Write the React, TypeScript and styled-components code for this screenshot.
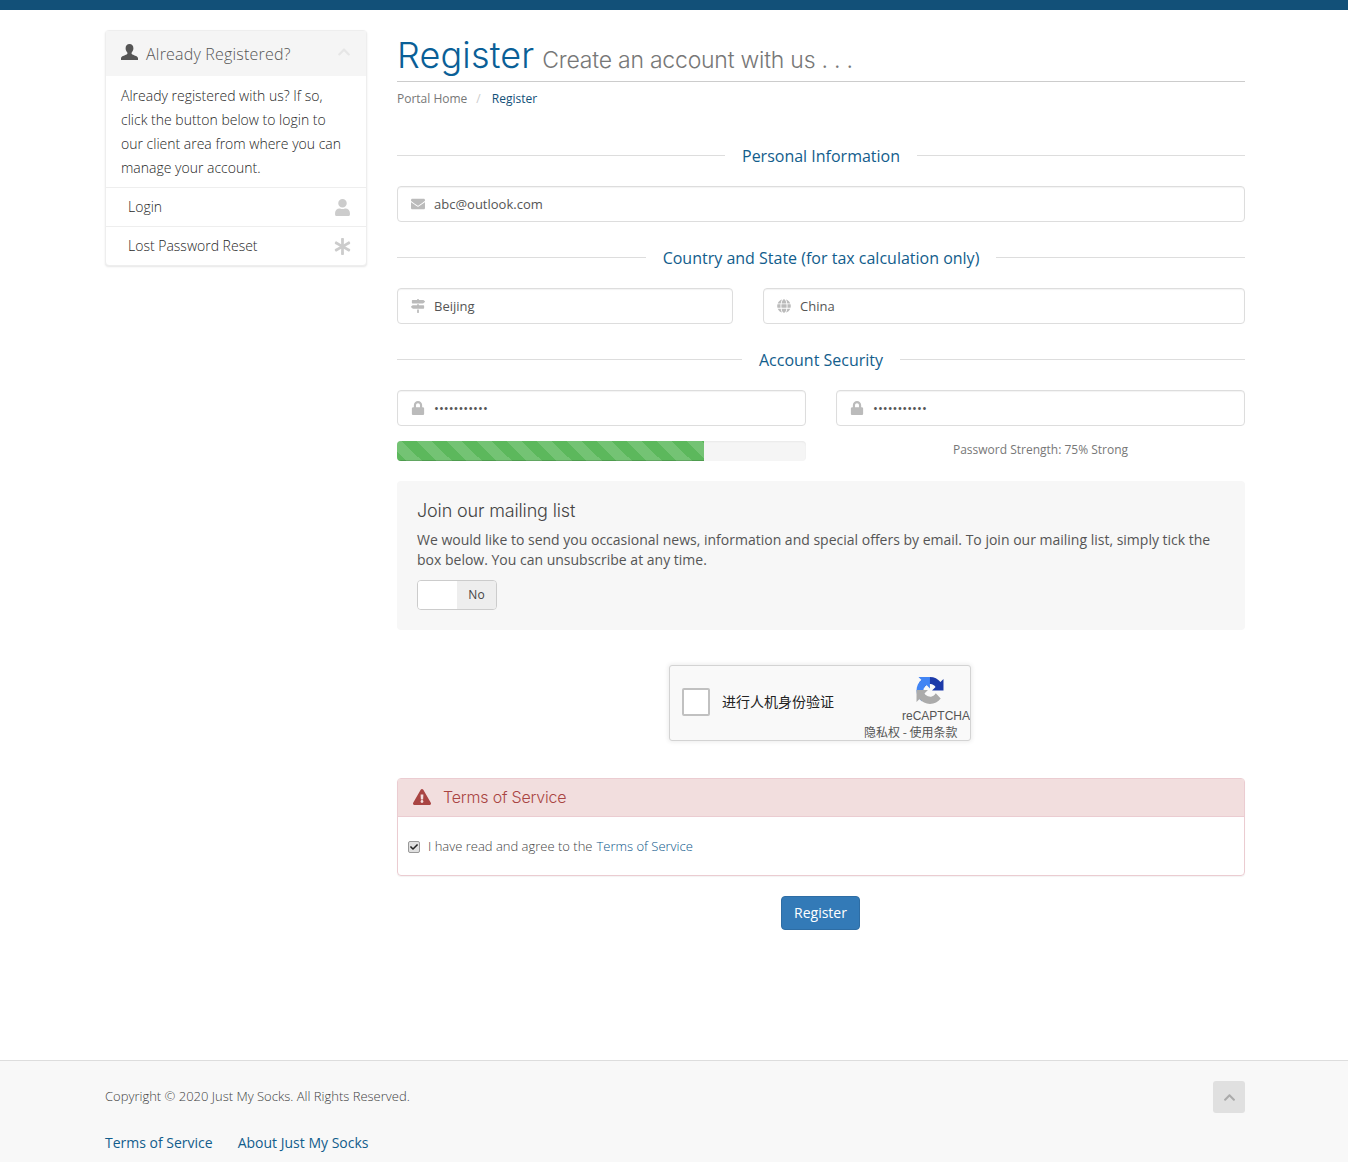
import React from "react";
import styled, { createGlobalStyle } from "styled-components";
import { FaEnvelope, FaMapSigns, FaGlobe, FaLock, FaAsterisk, FaExclamationTriangle, FaCheck, FaChevronUp, FaUser } from "react-icons/fa";

const Global = createGlobalStyle`
  html, body { margin: 0; padding: 0; background: #fff; }
  body { font-family: "Open Sans", "Liberation Sans", sans-serif; font-size: 14px; color: #444; line-height: 20px; }
  * { box-sizing: border-box; }
`;

const Page = styled.div`
  min-height: 1162px;
  display: flex;
  flex-direction: column;
  border-top: 10px solid #125078;
`;
const Container = styled.main`
  flex: 1;
  width: 1140px;
  margin-left: 105px;
  padding-top: 20px;
  display: flex;
  gap: 30px;
  align-items: flex-start;
`;
const Side = styled.aside`
  width: 262px;
  border: 1px solid #eee;
  border-radius: 4px;
  box-shadow: 0 1px 2px rgba(0, 0, 0, 0.1);
  background: #fff;
`;
const SideHead = styled.div`
  height: 45px;
  background: #f5f5f5;
  display: flex;
  align-items: center;
  padding: 0 15px;
  font-size: 16px;
  font-weight: 300;
  letter-spacing: 0.2px;
  color: #555;
`;
const SideHeadIcon = styled.svg`
  width: 17px;
  height: 16px;
  margin-right: 8px;
  margin-top: -3px;
  fill: #555;
`;
const Chevron = styled.span`
  margin-left: auto;
  display: flex;
  color: #e6e6e6;
  font-size: 14px;
  margin-top: -4px;
`;
const SideBody = styled.p`
  margin: 0;
  padding: 8px 15px 7px;
  line-height: 24px;
  font-weight: 300;
  color: #1f1f1f;
`;
const SideItem = styled.a`
  height: 39px;
  display: flex;
  align-items: center;
  justify-content: space-between;
  padding: 0 15px 0 22px;
  border-top: 1px solid #eee;
  font-weight: 300;
  color: #1f1f1f;
`;
const SideIcon = styled.span`
  display: flex;
  color: #ccc;
  font-size: 17px;
`;
const Content = styled.section`
  width: 848px;
  display: flex;
  flex-direction: column;
`;
const Title = styled.h1`
  margin: 0;
  height: 52px;
  border-bottom: 1px solid #ccc;
  display: flex;
  align-items: baseline;
  font-family: "Inter", "Lato", sans-serif;
  font-weight: 300;
  font-size: 36px;
  line-height: 51px;
  color: #0a5f97;
  letter-spacing: 0.15px;
`;
const Sub = styled.span`
  font-size: 23px;
  color: #777;
  margin-left: 8px;
  letter-spacing: -0.23px;
`;
const Crumbs = styled.nav`
  display: flex;
  margin-top: 7px;
  height: 20px;
  font-size: 12px;
  color: #777;
`;
const CrumbSep = styled.span`
  color: #ccc;
  margin: 0 11px 0 9px;
`;
const CrumbActive = styled.span`
  color: #125078;
`;
const Divider = styled.div<{ $top: number }>`
  display: flex;
  align-items: center;
  gap: 17px;
  margin-top: ${(p) => p.$top}px;
  height: 24px;
  font-size: 16px;
  color: #125d8c;
  white-space: nowrap;
  &::before, &::after {
    content: "";
    flex: 1;
    border-top: 1px solid #ddd;
    margin-bottom: 2px;
  }
`;
const Row = styled.div<{ $columns: string }>`
  display: grid;
  grid-template-columns: ${(p) => p.$columns};
  gap: 30px;
  margin-top: 18px;
`;
const Field = styled.label`
  height: 36px;
  display: flex;
  align-items: center;
  border: 1px solid #ddd;
  border-radius: 4px;
  background: #fff;
  box-shadow: inset 0 1px 1px rgba(0, 0, 0, 0.05);
`;
const FieldIcon = styled.span`
  width: 36px;
  padding-left: 4px;
  display: flex;
  justify-content: center;
  color: #bbb;
  font-size: 14px;
`;
const FieldInput = styled.input`
  flex: 1;
  min-width: 0;
  border: 0;
  outline: 0;
  padding: 0;
  background: transparent;
  font: inherit;
  font-size: 13px;
  color: #555;
`;
const StrengthRow = styled.div`
  display: grid;
  grid-template-columns: 1fr 1fr;
  gap: 30px;
  margin-top: 15px;
`;
const Track = styled.div`
  height: 20px;
  background: #f5f5f5;
  border-radius: 4px;
  overflow: hidden;
  box-shadow: inset 0 1px 2px rgba(0, 0, 0, 0.05);
`;
const Fill = styled.div`
  height: 100%;
  background-color: #5cb85c;
  background-image: linear-gradient(45deg, rgba(255,255,255,.15) 25%, transparent 25%, transparent 50%, rgba(255,255,255,.15) 50%, rgba(255,255,255,.15) 75%, transparent 75%, transparent);
  background-size: 30px 30px;
  background-position: 20px 0;
  box-shadow: inset 0 -1px 0 rgba(0, 0, 0, 0.15);
`;
const StrengthText = styled.div`
  text-align: center;
  font-size: 12px;
  line-height: 18px;
  color: #777;
`;
const Mailing = styled.div`
  margin-top: 20px;
  height: 149px;
  background: #f7f7f7;
  border-radius: 4px;
  padding: 18px 20px 20px;
`;
const MailingTitle = styled.h2`
  margin: 0;
  font-family: "Inter", "Lato", sans-serif;
  font-weight: 300;
  font-size: 18px;
  line-height: 24px;
  letter-spacing: -0.15px;
  color: #444;
`;
const MailingText = styled.p`
  margin: 7px 0 0;
  line-height: 20px;
  color: #555;
`;
const Toggle = styled.div`
  display: flex;
  width: 80px;
  height: 30px;
  margin-top: 10px;
  border: 1px solid #ccc;
  border-radius: 4px;
  overflow: hidden;
`;
const ToggleBlank = styled.span`
  flex: 1;
  background: #fff;
`;
const ToggleOff = styled.span`
  flex: 1;
  background: #eee;
  color: #444;
  font-size: 12px;
  display: flex;
  align-items: center;
  justify-content: center;
`;
const CaptchaWrap = styled.div`
  margin-top: 35px;
  padding-right: 2px;
  display: flex;
  justify-content: center;
`;
const Captcha = styled.div`
  width: 302px;
  height: 76px;
  border: 1px solid #d3d3d3;
  border-radius: 3px;
  background: #f9f9f9;
  box-shadow: 0 0 4px 1px rgba(0, 0, 0, 0.08);
  display: flex;
  align-items: center;
  padding-left: 12px;
  overflow: hidden;
`;
const CaptchaBox = styled.span`
  width: 28px;
  height: 28px;
  margin-top: -2px;
  border: 2px solid #c1c1c1;
  border-radius: 2px;
  background: #fff;
  margin-right: 12px;
`;
const CaptchaLabel = styled.span`
  font-family: "Noto Sans CJK SC", sans-serif;
  font-size: 14px;
  margin-top: -4px;
  color: #222;
`;
const CaptchaBrand = styled.div`
  margin-left: auto;
  width: 107px;
  height: 100%;
  display: flex;
  flex-direction: column;
  padding-top: 11px;
  color: #555;
  font-size: 12px;
  line-height: 16px;
`;
const CaptchaLogo = styled.svg`
  width: 32px;
  height: 32px;
  margin-left: 51px;
`;
const CaptchaName = styled.span`
  font-family: "Liberation Sans", sans-serif;
  align-self: flex-end;
  margin-top: 4px;
`;
const CaptchaTerms = styled.span`
  font-family: "Noto Sans CJK SC", sans-serif;
  white-space: nowrap;
  line-height: 16px;
  margin-left: 1px;
`;
const Terms = styled.div`
  margin-top: 37px;
  height: 98px;
  border: 1px solid #ebccd1;
  border-radius: 4px;
  box-shadow: 0 1px 1px rgba(0, 0, 0, 0.05);
`;
const TermsHead = styled.div`
  height: 38px;
  background: #f2dede;
  border-bottom: 1px solid #ebccd1;
  display: flex;
  align-items: center;
  padding: 0 0 1px 15px;
  font-family: "Inter", "Lato", sans-serif;
  font-weight: 300;
  font-size: 16px;
  letter-spacing: -0.2px;
  color: #a94442;
`;
const TermsIcon = styled.span`
  display: flex;
  font-size: 18px;
  margin-right: 12px;
`;
const TermsBody = styled.div`
  display: flex;
  align-items: center;
  padding: 19px 10px;
  font-size: 13px;
  font-weight: 300;
  color: #444;
`;
const Check = styled.span`
  width: 12px;
  height: 12px;
  border: 1px solid #999;
  border-radius: 2px;
  background: #e0e0e0;
  display: flex;
  align-items: center;
  justify-content: center;
  font-size: 8px;
  color: #222;
  margin: 2px 8px 0 0;
`;
const TermsLink = styled.a`
  color: #0b568a;
  margin-left: 4px;
`;
const Actions = styled.div`
  display: flex;
  justify-content: center;
  margin-top: 20px;
  padding-right: 1px;
`;
const Submit = styled.button`
  height: 34px;
  width: 79px;
  padding: 0;
  border: 1px solid #2e6da4;
  border-radius: 4px;
  background: #337ab7;
  color: #fff;
  font: inherit;
`;
const Footer = styled.footer`
  height: 102px;
  background: #f8f8f8;
  border-top: 1px solid #ddd;
`;
const FooterInner = styled.div`
  width: 1140px;
  margin-left: 105px;
  padding-top: 20px;
`;
const FooterTop = styled.div`
  display: flex;
  justify-content: space-between;
  align-items: center;
  height: 32px;
  font-size: 13px;
  font-weight: 300;
  color: #3f3f3f;
`;
const Copy = styled.span`
  margin-top: -2px;
`;
const TopButton = styled.a`
  width: 32px;
  height: 32px;
  border-radius: 3px;
  background: #e0e0e0;
  color: #aaa;
  font-size: 13px;
  display: flex;
  align-items: center;
  justify-content: center;
`;
const FooterLinks = styled.div`
  display: flex;
  gap: 25px;
  margin-top: 20px;
`;
const FooterLink = styled.a`
  color: #125d8c;
`;

export default function App() {
  return (
    <Page>
      <Global />
      <Container>
        <Side>
          <SideHead>
            <SideHeadIcon viewBox="0 0 17 16">
              <path d="M8.5 0C6 0 4.6 1.9 4.6 4.2c0 1.7.7 3.2 1.7 4.2.3.4.3 1.2-.1 1.7C5.1 11.3.6 12 0 14v2h17v-2c-.6-2-5.100-2.700-6.200-3.900-.4-.5-.4-1.300-.1-1.700 1-1 1.700-2.500 1.700-4.200C12.400 1.900 11 0 8.500 0z" />
            </SideHeadIcon>
            Already Registered?
            <Chevron><FaChevronUp /></Chevron>
          </SideHead>
          <SideBody>Already registered with us? If so, click the button below to login to our client area from where you can manage your account.</SideBody>
          <SideItem>Login<SideIcon><FaUser /></SideIcon></SideItem>
          <SideItem>Lost Password Reset<SideIcon><FaAsterisk /></SideIcon></SideItem>
        </Side>
        <Content>
          <Title>Register<Sub>Create an account with us . . .</Sub></Title>
          <Crumbs>Portal Home<CrumbSep>/</CrumbSep><CrumbActive>Register</CrumbActive></Crumbs>
          <Divider $top={35}>Personal Information</Divider>
          <Row $columns="1fr">
            <Field><FieldIcon><FaEnvelope /></FieldIcon><FieldInput readOnly value="abc@outlook.com" /></Field>
          </Row>
          <Divider $top={24}>Country and State (for tax calculation only)</Divider>
          <Row $columns="336px 482px">
            <Field><FieldIcon><FaMapSigns /></FieldIcon><FieldInput readOnly value="Beijing" /></Field>
            <Field><FieldIcon><FaGlobe /></FieldIcon><FieldInput readOnly value="China" /></Field>
          </Row>
          <Divider $top={24}>Account Security</Divider>
          <Row $columns="1fr 1fr">
            <Field><FieldIcon><FaLock /></FieldIcon><FieldInput readOnly type="password" value="abcdefghijk" /></Field>
            <Field><FieldIcon><FaLock /></FieldIcon><FieldInput readOnly type="password" value="abcdefghijk" /></Field>
          </Row>
          <StrengthRow>
            <Track><Fill style={{ width: "75%" }} /></Track>
            <StrengthText>Password Strength: 75% Strong</StrengthText>
          </StrengthRow>
          <Mailing>
            <MailingTitle>Join our mailing list</MailingTitle>
            <MailingText>We would like to send you occasional news, information and special offers by email. To join our mailing list, simply tick the box below. You can unsubscribe at any time.</MailingText>
            <Toggle><ToggleBlank /><ToggleOff>No</ToggleOff></Toggle>
          </Mailing>
          <CaptchaWrap>
            <Captcha>
              <CaptchaBox />
              <CaptchaLabel>进行人机身份验证</CaptchaLabel>
              <CaptchaBrand>
                <CaptchaLogo viewBox="0 0 64 64">
                  <path d="M64 31.955l-.033-1.37V4.687l-7.16 7.16C50.948 4.674 42.033.093 32.05.093c-10.4 0-19.622 4.96-25.458 12.64l11.736 11.86c1.15-2.127 2.784-3.955 4.754-5.33 2.05-1.6 4.952-2.91 9-2.91.49 0 .867.058 1.144.165 5.014.396 9.36 3.163 11.92 7.18l-8.307 8.306c10.523-.04 22.412-.066 27.16.006" fill="#1c3aa9" />
                  <path d="M31.904 0l-1.37.033H4.636l7.16 7.16C4.622 13.05.04 21.967.04 31.95c0 10.4 4.96 19.622 12.64 25.458l11.86-11.736c-2.127-1.15-3.955-2.784-5.33-4.754-1.6-2.05-2.91-4.952-2.91-9 0-.49.058-.867.165-1.144.396-5.014 3.163-9.36 7.18-11.92l8.306 8.307c-.04-10.523-.066-22.412.006-27.16" fill="#4285f4" />
                  <path d="M0 31.95l.033 1.37v25.9l7.16-7.16c5.858 7.173 14.774 11.755 24.757 11.755 10.4 0 19.622-4.96 25.458-12.64L45.672 38.44c-1.15 2.127-2.784 3.955-4.754 5.33-2.05 1.6-4.952 2.91-9 2.91-.49 0-.867-.058-1.144-.165-5.014-.396-9.36-3.163-11.92-7.18l8.307-8.306c-10.523.04-22.412.066-27.16-.006" fill="#ababab" />
                </CaptchaLogo>
                <CaptchaName>reCAPTCHA</CaptchaName>
                <CaptchaTerms>隐私权 - 使用条款</CaptchaTerms>
              </CaptchaBrand>
            </Captcha>
          </CaptchaWrap>
          <Terms>
            <TermsHead><TermsIcon><FaExclamationTriangle /></TermsIcon>Terms of Service</TermsHead>
            <TermsBody>
              <Check><FaCheck /></Check>
              I have read and agree to the<TermsLink>Terms of Service</TermsLink>
            </TermsBody>
          </Terms>
          <Actions><Submit>Register</Submit></Actions>
        </Content>
      </Container>
      <Footer>
        <FooterInner>
          <FooterTop>
            <Copy>Copyright © 2020 Just My Socks. All Rights Reserved.</Copy>
            <TopButton><FaChevronUp /></TopButton>
          </FooterTop>
          <FooterLinks>
            <FooterLink>Terms of Service</FooterLink>
            <FooterLink>About Just My Socks</FooterLink>
          </FooterLinks>
        </FooterInner>
      </Footer>
    </Page>
  );
}
